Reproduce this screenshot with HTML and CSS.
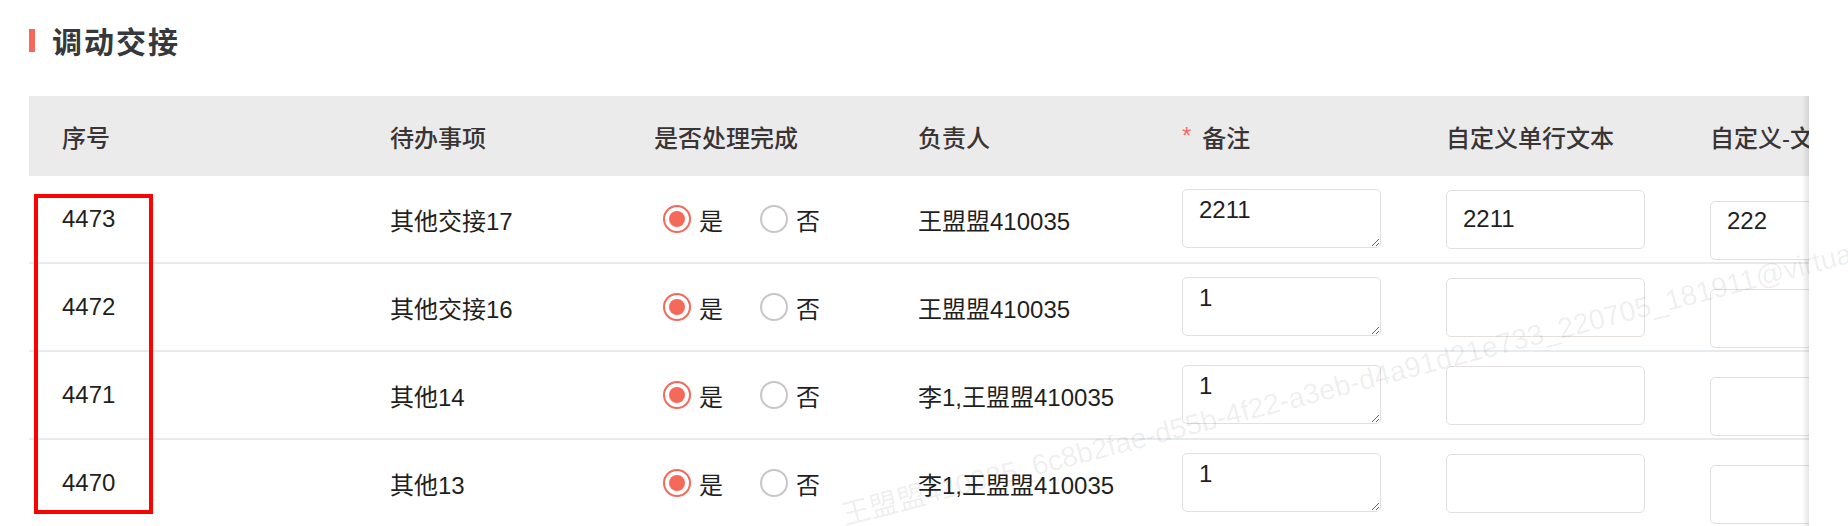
FILE: index.html
```html
<!DOCTYPE html>
<html lang="zh-CN">
<head>
<meta charset="utf-8">
<title>调动交接</title>
<link rel="stylesheet" href="styles.css">
</head>
<body>
<div class="page">
  <h2 class="title"><span class="title-bar"></span><span class="title-text">调动交接</span></h2>
  <div class="table-wrap">
    <div class="row head">
      <div class="cell">序号</div>
      <div class="cell">待办事项</div>
      <div class="cell">是否处理完成</div>
      <div class="cell">负责人</div>
      <div class="cell"><span class="req">*</span>备注</div>
      <div class="cell">自定义单行文本</div>
      <div class="cell">自定义-文本</div>
    </div>
    <div class="row body-row">
      <div class="cell">4473</div>
      <div class="cell">其他交接17</div>
      <div class="cell"><div class="radios"><span class="radio on"><span class="radio-dot"></span>是</span><span class="radio"><span class="radio-dot"></span>否</span></div></div>
      <div class="cell">王盟盟410035</div>
      <div class="cell"><textarea class="ta">2211</textarea></div>
      <div class="cell"><input class="inp" type="text" value="2211"></div>
      <div class="cell"><input class="inp inp-low" type="text" value="222"></div>
    </div>
    <div class="row body-row">
      <div class="cell">4472</div>
      <div class="cell">其他交接16</div>
      <div class="cell"><div class="radios"><span class="radio on"><span class="radio-dot"></span>是</span><span class="radio"><span class="radio-dot"></span>否</span></div></div>
      <div class="cell">王盟盟410035</div>
      <div class="cell"><textarea class="ta">1</textarea></div>
      <div class="cell"><input class="inp" type="text" value=""></div>
      <div class="cell"><input class="inp inp-low" type="text" value=""></div>
    </div>
    <div class="row body-row">
      <div class="cell">4471</div>
      <div class="cell">其他14</div>
      <div class="cell"><div class="radios"><span class="radio on"><span class="radio-dot"></span>是</span><span class="radio"><span class="radio-dot"></span>否</span></div></div>
      <div class="cell">李1,王盟盟410035</div>
      <div class="cell"><textarea class="ta">1</textarea></div>
      <div class="cell"><input class="inp" type="text" value=""></div>
      <div class="cell"><input class="inp inp-low" type="text" value=""></div>
    </div>
    <div class="row body-row">
      <div class="cell">4470</div>
      <div class="cell">其他13</div>
      <div class="cell"><div class="radios"><span class="radio on"><span class="radio-dot"></span>是</span><span class="radio"><span class="radio-dot"></span>否</span></div></div>
      <div class="cell">李1,王盟盟410035</div>
      <div class="cell"><textarea class="ta">1</textarea></div>
      <div class="cell"><input class="inp" type="text" value=""></div>
      <div class="cell"><input class="inp inp-low" type="text" value=""></div>
    </div>
    <div class="fixed-shadow"></div>
  </div>
</div>
<div class="annot"></div>
<div class="watermark">王盟盟410035_6c8b2fae-d55b-4f22-a3eb-d4a91d21e733_220705_181911@virtual</div>
</body>
</html>
```
FILE: styles.css
```css
html, body {
  margin: 0;
  padding: 0;
  overflow: hidden;
  background: #fff;
}
body {
  position: relative;
  font-family: "Liberation Sans", "Noto Sans CJK SC", sans-serif;
  color: #1f1f1f;
}
.page {
  padding: 20px 0 0 29px;
}
.title {
  margin: 0;
  height: 40px;
  display: flex;
  align-items: center;
  gap: 17px;
  font-family: "Noto Sans CJK SC", sans-serif;
  font-size: 30px;
  font-weight: 700;
  letter-spacing: 2px;
  color: #35383c;
}
.title-bar {
  width: 6px;
  height: 23px;
  background: #f4695a;
}
.table-wrap {
  position: relative;
  margin-top: 36px;
  width: 1780px;
  overflow: hidden;
}
.row {
  display: grid;
  grid-template-columns: 328px repeat(6, 264px);
  width: 1912px;
}
.head {
  height: 80px;
  background: #ebebeb;
  color: #3a3434;
  font-weight: 500;
}
.body-row {
  height: 88px;
  box-sizing: border-box;
  border-bottom: 2px solid #e8ebee;
}
.cell {
  display: flex;
  align-items: center;
  padding-left: 33px;
  white-space: nowrap;
  font-size: 24px;
  overflow: hidden;
}
.req {
  color: #f56c6c;
  margin-right: 11px;
}
.radios {
  display: flex;
  align-items: center;
  margin-left: 9px;
}
.radio {
  display: inline-flex;
  align-items: center;
  gap: 8px;
  margin-right: 37px;
}
.radio-dot {
  position: relative;
  width: 28px;
  height: 28px;
  box-sizing: border-box;
  border: 2px solid #c9c6c6;
  border-radius: 50%;
  background: #fff;
}
.radio.on .radio-dot {
  border-color: #f4695a;
}
.radio.on .radio-dot::after {
  content: "";
  position: absolute;
  inset: 4px;
  border-radius: 50%;
  background: #f4695a;
}
.ta, .inp {
  display: block;
  box-sizing: border-box;
  width: 199px;
  height: 59px;
  margin: 0;
  border: 1px solid #e3dfdf;
  border-radius: 5px;
  background: #fff;
  color: #1f1f1f;
  font-family: "Liberation Sans", "Noto Sans CJK SC", sans-serif;
  font-size: 24px;
  outline: none;
}
.ta {
  margin-top: -2px;
  padding: 6px 16px;
  line-height: 28px;
  resize: both;
}
.inp {
  padding: 0 16px;
}
.inp-low {
  margin-top: 22px;
  padding-bottom: 18px;
}
.fixed-shadow {
  position: absolute;
  top: 0;
  right: 0;
  width: 7px;
  height: 100%;
  background: linear-gradient(to right, rgba(0, 0, 0, 0), rgba(0, 0, 0, 0.1));
}
.annot {
  position: absolute;
  left: 34px;
  top: 194px;
  width: 119px;
  height: 320px;
  box-sizing: border-box;
  border: 4px solid #ff0000;
}
.watermark {
  position: absolute;
  left: 846px;
  top: 500px;
  font-family: "Liberation Sans", "Noto Sans CJK SC", sans-serif;
  font-size: 28.5px;
  line-height: 30px;
  white-space: nowrap;
  color: rgba(0, 0, 0, 0.08);
  transform-origin: 0 100%;
  transform: rotate(-14.6deg);
  pointer-events: none;
}
```
